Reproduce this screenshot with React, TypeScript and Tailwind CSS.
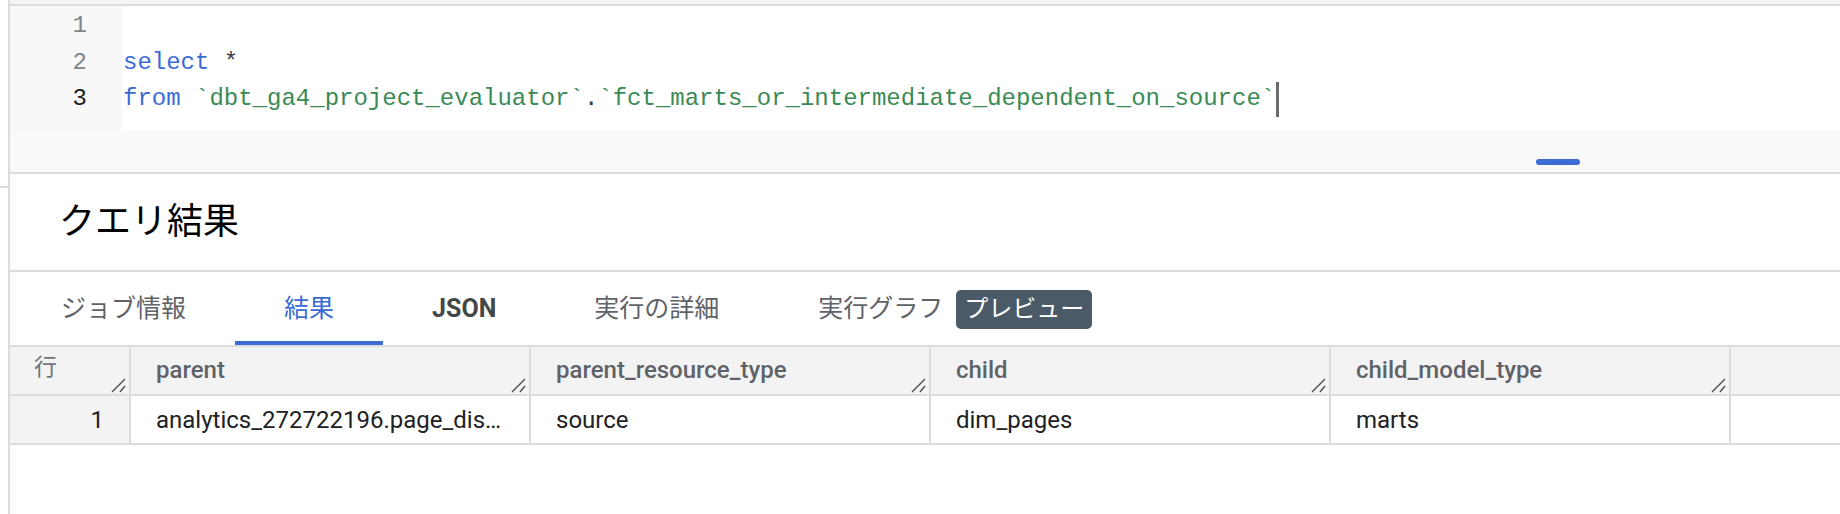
import React from "react";

// ─────────────────────────────────────────
// Editor
// ─────────────────────────────────────────

const mono = { fontFamily: '"Liberation Mono", "DejaVu Sans Mono", monospace' };

function Gutter() {
  return (
    <div
      className="w-[112px] shrink-0 bg-[#f8f8f8] pr-[35px] pt-[2px] text-right text-[24px] leading-[36.5px] text-[#80868b]"
      style={mono}
    >
      <div>1</div>
      <div>2</div>
      <div className="text-[#202124]">3</div>
    </div>
  );
}

function Code() {
  return (
    <div
      className="flex-1 bg-white pl-px pt-[2px] text-[24px] leading-[36.5px] whitespace-pre"
      style={mono}
    >
      <div>&nbsp;</div>
      <div>
        <span className="text-[#3b6bd5]">select</span>
        <span className="text-[#3c4043]"> *</span>
      </div>
      <div className="flex items-center">
        <span className="text-[#3b6bd5]">from</span>
        <span> </span>
        <span className="text-[#3a8a54]">`dbt_ga4_project_evaluator`</span>
        <span className="text-[#3c4043]">.</span>
        <span className="text-[#3a8a54]">`fct_marts_or_intermediate_dependent_on_source`</span>
        <span className="ml-[1px] inline-block h-[35px] w-[3px] bg-[#6b6b6b]" />
      </div>
    </div>
  );
}

function Editor() {
  return (
    <>
      <div className="h-1 bg-[#f5f5f5]" />
      <div className="h-[2px] bg-[#dcdcdc]" />
      <div className="flex h-[125px]">
        <Gutter />
        <Code />
      </div>
      <div className="h-[41px] bg-[#f9f9f9] pl-[1526px] pt-[28px]">
        <div className="h-[6px] w-[44px] rounded-full bg-[#3d6bd4]" />
      </div>
      <div className="h-[2px] bg-[#dcdcdc]" />
    </>
  );
}

// ─────────────────────────────────────────
// Tabs
// ─────────────────────────────────────────

function Tab({
  children,
  active,
  className = "",
}: {
  children: React.ReactNode;
  active?: boolean;
  className?: string;
}) {
  return (
    <div className="flex h-full flex-col">
      <div
        className={`flex flex-1 items-center px-[49px] pt-[4px] text-[25px] ${
          active ? "text-[#3b6bd5]" : "text-[#5f6368]"
        } ${className}`}
      >
        {children}
      </div>
      <div className={`h-[4px] ${active ? "bg-[#3d6bd4]" : ""}`} />
    </div>
  );
}

function Tabs() {
  return (
    <div className="flex h-[73px] pl-[2px]">
      <Tab>ジョブ情報</Tab>
      <Tab active>結果</Tab>
      <Tab className="font-bold !text-[#444746]">JSON</Tab>
      <Tab>実行の詳細</Tab>
      <div className="flex h-full items-center pl-[50px] pt-[1px] text-[25px] text-[#5f6368]">
        実行グラフ
        <span className="ml-[13px] flex h-[39px] items-center rounded-[5px] bg-[#4a5a66] px-[8px] text-[24px] text-white">
          プレビュー
        </span>
      </div>
    </div>
  );
}

// ─────────────────────────────────────────
// Table
// ─────────────────────────────────────────

function ResizeGrip() {
  return (
    <svg
      className="absolute bottom-[1px] right-[3px]"
      width="15"
      height="15"
      viewBox="0 0 15 15"
      fill="none"
      stroke="#5a5a5a"
      strokeWidth="1.6"
    >
      <line x1="1" y1="14" x2="14" y2="1" />
      <line x1="9" y1="14" x2="14" y2="8" />
    </svg>
  );
}

const columns = ["parent", "parent_resource_type", "child", "child_model_type"];
const row = ["analytics_272722196.page_dis…", "source", "dim_pages", "marts"];

function ResultsTable() {
  return (
    <div className="border-t-2 border-[#dcdcdc]">
      <div className="flex h-[49px] border-b-2 border-[#dcdcdc] bg-[#f3f3f3]">
        <div className="relative flex w-[121px] shrink-0 items-center border-r-2 border-[#dcdcdc] pb-[5px] pl-[24px] text-[23px] text-[#70757a]">
          行
          <ResizeGrip />
        </div>
        {columns.map((c) => (
          <div
            key={c}
            className="relative flex w-[400px] shrink-0 items-center border-r-2 border-[#dcdcdc] pb-[2px] pl-[25px] text-[24px] font-medium text-[#5f6368]"
          >
            {c}
            <ResizeGrip />
          </div>
        ))}
        <div className="flex-1" />
      </div>
      <div className="flex h-[49px] border-b-2 border-[#dcdcdc]">
        <div className="flex w-[121px] shrink-0 items-center justify-end border-r-2 border-[#dcdcdc] bg-[#f3f3f3] pr-[25px] text-[24px] text-[#202124]">
          1
        </div>
        {row.map((v, i) => (
          <div
            key={i}
            className="flex w-[400px] shrink-0 items-center border-r-2 border-[#dcdcdc] pl-[25px] text-[24px] text-[#202124]"
          >
            {v}
          </div>
        ))}
        <div className="flex-1" />
      </div>
    </div>
  );
}

// ─────────────────────────────────────────
// App
// ─────────────────────────────────────────

export default function App() {
  return (
    <div
      className="flex h-[514px] w-[1840px] overflow-hidden bg-white"
      style={{ fontFamily: 'Roboto, "Noto Sans CJK JP", sans-serif' }}
    >
      <div className="w-[8px] shrink-0">
        <div className="mt-[186px] h-[2px] bg-[#dcdcdc]" />
      </div>
      <div className="w-[2px] shrink-0 bg-[#dcdcdc]" />
      <div className="flex min-w-0 flex-1 flex-col">
        <Editor />
        <div className="flex h-[96px] items-center pl-[49px] text-[36px] text-black">
          クエリ結果
        </div>
        <div className="h-[2px] bg-[#dcdcdc]" />
        <Tabs />
        <ResultsTable />
      </div>
    </div>
  );
}
